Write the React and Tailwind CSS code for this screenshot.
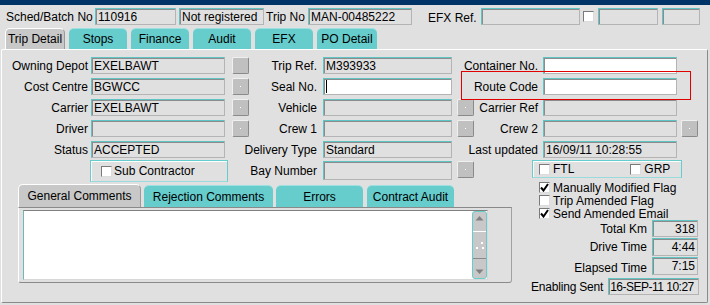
const FIELD =
  "h-[17px] flex items-center px-[2px] whitespace-nowrap overflow-hidden border border-t-[#5ec4c4] border-l-[#5ec4c4] border-r-[#b4b4b4] border-b-[#b4b4b4] shadow-[inset_1px_1px_0_#8c8c8c]";

function Field({ w, value, white, right, h, cls }) {
  return (
    <div
      className={`${FIELD} ${w} ${h || ""} ${cls || ""} ${white ? "bg-white" : "bg-[#e0e0e0]"} ${
        right ? "justify-end" : ""
      }`}
    >
      {value}
    </div>
  );
}

function Btn({ dot = true, mt }) {
  return (
    <div
      className={`w-[17px] h-[17px] shrink-0 bg-[#c0c0c0] rounded-[2px] border border-t-[#f0f0f0] border-l-[#f0f0f0] border-r-[#8a8a8a] border-b-[#8a8a8a] flex items-center justify-center ${
        mt || ""
      }`}
    >
      {dot && <div className="w-[1px] h-[1px] bg-white" />}
    </div>
  );
}

function Check({ checked }) {
  return (
    <div className="w-[11px] h-[11px] shrink-0 bg-white border border-t-[#7a7a7a] border-l-[#7a7a7a] border-b-[#dcdcdc] border-r-[#dcdcdc] flex items-center justify-center">
      {checked && (
        <svg width="9" height="9" viewBox="0 0 9 9">
          <path d="M1 4.5 L3.5 7.5 L8 1" fill="none" stroke="#000" strokeWidth="2" />
        </svg>
      )}
    </div>
  );
}

function Label({ w, children }) {
  return (
    <div className={`${w} h-[17px] shrink-0 flex items-center justify-end whitespace-nowrap`}>
      {children}
    </div>
  );
}

function Tab({ w, h, active, children }) {
  return (
    <div
      className={`${w} ${h} shrink-0 flex items-center justify-center rounded-t-[5px] whitespace-nowrap ${
        active
          ? "bg-[#c8c8c8] border-t border-l border-t-white border-l-white border-r border-r-[#9a9a9a]"
          : "bg-[#66cccc] border-t border-t-[#9ee0e0]"
      }`}
    >
      {children}
    </div>
  );
}

function Row({ a, b, c, h = "h-[21px]" }) {
  return (
    <div className={`flex items-start ${h}`}>
      <Label w="w-[86px]">{a.label}</Label>
      <div className="ml-[3px]">
        <Field w="w-[134px]" value={a.value} />
      </div>
      <div className="ml-[7px] w-[17px]">{a.btn && <Btn dot={a.dot !== false} />}</div>
      <Label w="w-[68px]">{b.label}</Label>
      <div className="ml-[6px]">
        <Field w="w-[129px]" value={b.value} white={b.white} />
      </div>
      <div className="ml-[5px] w-[17px]">{b.btn && <Btn />}</div>
      <Label w="w-[64px]">{c.label}</Label>
      <div className="ml-[5px]">
        <Field w="w-[134px]" value={c.value} white={c.white} />
      </div>
      <div className="ml-[4px] w-[17px]">{c.btn && <Btn />}</div>
    </div>
  );
}

export default function App() {
  return (
    <div
      className="w-[710px] h-[305px] bg-[#e0e0e0] text-[12px] text-black overflow-hidden flex flex-col"
      style={{ fontFamily: '"Liberation Sans", Arial, sans-serif' }}
    >
      <div className="h-[5px] bg-[#003366] shrink-0" />

      {/* header row */}
      <div className="flex items-center h-[17px] mt-[3px] pl-[6px] shrink-0">
        <div className="w-[89px] whitespace-nowrap">Sched/Batch No</div>
        <Field w="w-[81px]" value="110916" />
        <div className="ml-[3px]">
          <Field w="w-[85px]" value="Not registered" />
        </div>
        <div className="w-[44px] pl-[2px] whitespace-nowrap">Trip No</div>
        <Field w="w-[104px]" value="MAN-00485222" />
        <div className="w-[69px] pl-[16px] pt-[3px] whitespace-nowrap">EFX Ref.</div>
        <Field w="w-[99px]" value="" />
        <div className="ml-[3px]">
          <Check />
        </div>
        <div className="ml-[4px]">
          <Field w="w-[60px]" value="" />
        </div>
        <div className="ml-[4px]">
          <Field w="w-[38px]" value="" />
        </div>
      </div>

      {/* main tabs */}
      <div className="flex items-end gap-[4px] pl-[5px] mt-[3px] h-[21px] shrink-0">
        <Tab w="w-[60px]" h="h-[21px]" active>
          Trip Detail
        </Tab>
        <Tab w="w-[58px]" h="h-[21px]">Stops</Tab>
        <Tab w="w-[58px]" h="h-[21px]">Finance</Tab>
        <Tab w="w-[58px]" h="h-[21px]">Audit</Tab>
        <Tab w="w-[58px]" h="h-[21px]">EFX</Tab>
        <Tab w="w-[60px]" h="h-[21px]">PO Detail</Tab>
      </div>

      {/* panel */}
      <div className="relative ml-[1px] w-[707px] h-[254px] shrink-0 border border-t-white border-l-white border-r-[#8a8a8a] border-b-[#8a8a8a] rounded-[2px] pt-[7px]">
        <Row
          a={{ label: "Owning Depot", value: "EXELBAWT", btn: true, dot: false }}
          b={{ label: "Trip Ref.", value: "M393933" }}
          c={{ label: "Container No.", value: "", white: true }}
        />
        <Row
          a={{ label: "Cost Centre", value: "BGWCC", btn: true }}
          b={{
            label: "Seal No.",
            value: <span className="inline-block w-[1px] h-[13px] bg-black" />,
            white: true,
          }}
          c={{ label: "Route Code", value: "", white: true }}
        />
        <Row
          a={{ label: "Carrier", value: "EXELBAWT", btn: true }}
          b={{ label: "Vehicle", value: "", btn: true }}
          c={{ label: "Carrier Ref", value: "" }}
        />
        <Row
          a={{ label: "Driver", value: "", btn: true }}
          b={{ label: "Crew 1", value: "", btn: true }}
          c={{ label: "Crew 2", value: "", btn: true }}
        />
        <Row
          h="h-[19px]"
          a={{ label: "Status", value: "ACCEPTED" }}
          b={{ label: "Delivery Type", value: "Standard" }}
          c={{ label: "Last updated", value: "16/09/11 10:28:55" }}
        />

        {/* lower section */}
        <div className="flex items-start">
          {/* left */}
          <div className="w-[529px] shrink-0">
            <div className="flex items-start h-[25px]">
              <div className="w-[88px] shrink-0" />
              <div className="w-[138px] h-[22px] shrink-0 flex items-center pl-[10px] border border-[#66cccc] border-b-[#9adada] shadow-[inset_1px_1px_0_#ffffff]">
                <Check />
                <span className="ml-[2px] whitespace-nowrap">Sub Contractor</span>
              </div>
              <div className="w-[89px] h-[19px] shrink-0 flex items-center justify-end mt-[1px] whitespace-nowrap">
                Bay Number
              </div>
              <div className="ml-[6px] mt-[1px]">
                <Field w="w-[129px]" h="h-[19px]" value="" />
              </div>
              <div className="ml-[5px] mt-[1px]">
                <Btn />
              </div>
            </div>

            {/* sub tabs */}
            <div className="flex items-end pl-[16px] h-[22px]">
              <Tab w="w-[123px]" h="h-[23px]" active>
                General Comments
              </Tab>
              <div className="ml-[3px]">
                <Tab w="w-[129px]" h="h-[22px]">Rejection Comments</Tab>
              </div>
              <div className="ml-[3px]">
                <Tab w="w-[87px]" h="h-[22px]">Errors</Tab>
              </div>
              <div className="ml-[4px]">
                <Tab w="w-[87px]" h="h-[22px]">Contract Audit</Tab>
              </div>
            </div>

            {/* sub panel */}
            <div className="ml-[16px] w-[494px] h-[76px] border border-t-[#8a8a8a] border-l-white border-r-[#a0a0a0] border-b-[#8a8a8a] rounded-b-[3px] pt-[2px] pl-[4px]">
              <div className="w-[465px] h-[70px] bg-white border border-t-[#808080] border-l-[#6fb8b8] border-b-[#d8d8d8] border-r-[#d8d8d8] flex justify-end">
                <div className="w-[15px] h-full bg-[#c8c8c8] border border-[#66cccc] rounded-[3px] flex flex-col items-center justify-between py-[3px]">
                  <svg width="9" height="6" viewBox="0 0 9 6">
                    <path d="M0.5 5.5 L4.5 1 L8.5 5.5 Z" fill="#808080" />
                  </svg>
                  <div className="w-[13px] border-t border-white" />
                  <div className="flex flex-col items-center gap-[3px]">
                    <div className="flex gap-[4px]">
                      <div className="w-[1px] h-[1px]" />
                      <div className="w-[2px] h-[2px] bg-white" />
                    </div>
                    <div className="flex gap-[4px]">
                      <div className="w-[2px] h-[2px] bg-white" />
                      <div className="w-[2px] h-[2px] bg-white" />
                    </div>
                  </div>
                  <div className="w-[13px] border-t border-[#8a8a8a]" />
                  <svg width="9" height="6" viewBox="0 0 9 6">
                    <path d="M0.5 0.5 L4.5 5 L8.5 0.5 Z" fill="#808080" />
                  </svg>
                </div>
              </div>
            </div>
          </div>

          {/* right */}
          <div className="w-[170px] shrink-0">
            <div className="ml-[1px] w-[150px] h-[18px] flex items-center pl-[6px] border border-[#66cccc] border-b-[#9adada] shadow-[inset_1px_1px_0_#ffffff]">
              <Check />
              <span className="ml-[3px]">FTL</span>
              <div className="ml-[56px]">
                <Check />
              </div>
              <span className="ml-[3px]">GRP</span>
            </div>
            <div className="pl-[8px] mt-[3px]">
              <div className="flex items-center h-[13px] gap-[3px]">
                <Check checked />
                <span className="whitespace-nowrap">Manually Modified Flag</span>
              </div>
              <div className="flex items-center h-[13px] gap-[3px]">
                <Check />
                <span className="whitespace-nowrap">Trip Amended Flag</span>
              </div>
              <div className="flex items-center h-[13px] gap-[3px]">
                <Check checked />
                <span className="whitespace-nowrap">Send Amended Email</span>
              </div>
            </div>
            <div className="flex items-start justify-end pr-[3px] h-[18px]">
              <span className="h-[17px] flex items-center mr-[5px]">Total Km</span>
              <Field w="w-[46px]" value="318" right />
            </div>
            <div className="flex items-start justify-end pr-[3px] h-[19px]">
              <span className="h-[18px] flex items-center mr-[5px]">Drive Time</span>
              <Field w="w-[46px]" h="h-[18px]" value="4:44" right />
            </div>
            <div className="flex items-start justify-end pr-[3px] h-[21px]">
              <span className="h-[18px] flex items-center mr-[5px] pt-[3px]">Elapsed Time</span>
              <Field w="w-[46px]" h="h-[18px]" value="7:15" right />
            </div>
            <div className="flex items-start justify-end pr-[2px] h-[17px]">
              <span className="h-[17px] flex items-center mr-[5px] whitespace-nowrap tracking-[-0.2px]">
                Enabling Sent
              </span>
              <Field w="w-[97px]" value="16-SEP-11 10:27" cls="tracking-[-0.5px] pl-[1px] pr-0" />
            </div>
          </div>
        </div>

        {/* annotation overlay */}
        <div className="absolute left-[459px] top-[21px] w-[230px] h-[29px] border border-[#e00000] pointer-events-none" />
      </div>
    </div>
  );
}
